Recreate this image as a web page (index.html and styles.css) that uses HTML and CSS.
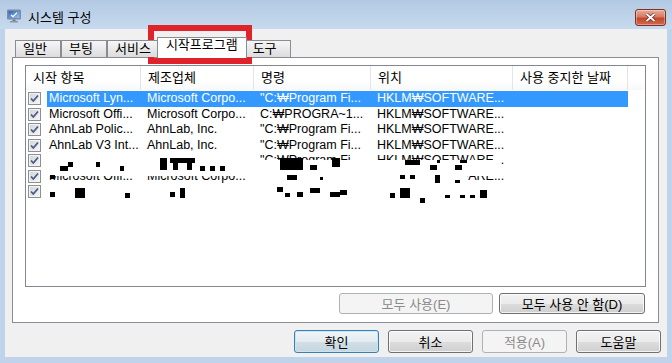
FILE: index.html
```html
<!DOCTYPE html>
<html lang="ko">
<head>
  <meta charset="UTF-8">
  <meta name="viewport" content="width=device-width, initial-scale=1.0">
  <title>시스템 구성</title>
  <link rel="stylesheet" href="styles.css">
</head>
<body>
  <div class="window">
    <div class="titlebar">
      <svg class="app-icon" width="16" height="16" viewBox="0 0 16 16">
        <defs>
          <linearGradient id="scr" x1="0" y1="0" x2="1" y2="1">
            <stop offset="0" stop-color="#2a62b8"/>
            <stop offset="1" stop-color="#9cc2ee"/>
          </linearGradient>
        </defs>
        <rect x="1" y="1.5" width="14" height="10" rx="1" fill="#7d8ca2"/>
        <rect x="2.5" y="3" width="11" height="7" fill="url(#scr)"/>
        <path d="M5 7 L7 8.6 L11 4.6" fill="none" stroke="#fff" stroke-width="1.3"/>
        <rect x="6.5" y="11.5" width="3" height="1.5" fill="#6b7a90"/>
        <rect x="4" y="13" width="8" height="1.5" fill="#8796ab"/>
      </svg>
      <span class="title">시스템 구성</span>
      <button class="close-btn" aria-label="닫기">
        <svg width="11" height="9" viewBox="0 0 11 9">
          <path d="M1.5 1 L9.5 8 M9.5 1 L1.5 8" stroke="#5b2a24" stroke-width="3.2"/>
          <path d="M1.5 1 L9.5 8 M9.5 1 L1.5 8" stroke="#fff" stroke-width="1.8"/>
        </svg>
      </button>
    </div>

    <div class="client">
      <ul class="tabs">
        <li>일반</li>
        <li>부팅</li>
        <li>서비스</li>
        <li class="active">시작프로그램</li>
        <li>도구</li>
      </ul>

      <div class="panel">
        <div class="listview">
          <div class="lv-head">
            <div>시작 항목</div>
            <div>제조업체</div>
            <div>명령</div>
            <div>위치</div>
            <div>사용 중지한 날짜</div>
            <div></div>
          </div>
          <div class="lv-body">
            <div class="lv-row selected">
              <div class="cell first"><span class="check"></span><span class="name">Microsoft Lyn...</span></div>
              <div class="cell">Microsoft Corpo...</div>
              <div class="cell">"C:₩Program Fi...</div>
              <div class="cell">HKLM₩SOFTWARE...</div>
              <div class="cell"></div>
              <div></div>
            </div>
            <div class="lv-row">
              <div class="cell first"><span class="check"></span><span class="name">Microsoft Offi...</span></div>
              <div class="cell">Microsoft Corpo...</div>
              <div class="cell">C:₩PROGRA~1...</div>
              <div class="cell">HKLM₩SOFTWARE...</div>
              <div class="cell"></div>
              <div></div>
            </div>
            <div class="lv-row">
              <div class="cell first"><span class="check"></span><span class="name">AhnLab Polic...</span></div>
              <div class="cell">AhnLab, Inc.</div>
              <div class="cell">"C:₩Program Fi...</div>
              <div class="cell">HKLM₩SOFTWARE...</div>
              <div class="cell"></div>
              <div></div>
            </div>
            <div class="lv-row">
              <div class="cell first"><span class="check"></span><span class="name">AhnLab V3 Int...</span></div>
              <div class="cell">AhnLab, Inc.</div>
              <div class="cell">"C:₩Program Fi...</div>
              <div class="cell">HKLM₩SOFTWARE...</div>
              <div class="cell"></div>
              <div></div>
            </div>
            <div class="lv-row">
              <div class="cell first"><span class="check"></span><span class="name"></span></div>
              <div class="cell"></div>
              <div class="cell">"C:₩Program Fi...</div>
              <div class="cell">HKLM₩SOFTWARE...</div>
              <div class="cell"></div>
              <div></div>
            </div>
            <div class="lv-row">
              <div class="cell first"><span class="check"></span><span class="name">Microsoft Offi...</span></div>
              <div class="cell">Microsoft Corpo...</div>
              <div class="cell">C:₩PROGRA~1...</div>
              <div class="cell">HKLM₩SOFTWARE...</div>
              <div class="cell"></div>
              <div></div>
            </div>
            <div class="lv-row">
              <div class="cell first"><span class="check"></span><span class="name"></span></div>
              <div class="cell"></div>
              <div class="cell"></div>
              <div class="cell"></div>
              <div class="cell"></div>
              <div></div>
            </div>
          </div>
        </div>

        <div class="panel-actions">
          <button class="btn wide" disabled>모두 사용(E)</button>
          <button class="btn wide2">모두 사용 안 함(D)</button>
        </div>
      </div>

      <div class="dialog-actions">
        <button class="btn default">확인</button>
        <button class="btn">취소</button>
        <button class="btn" disabled>적용(A)</button>
        <button class="btn">도움말</button>
      </div>
    </div>

    <!-- censored rows in the original capture -->
    <svg class="redact" width="672" height="363" viewBox="0 0 672 363">
      <g fill="#fff">
        <rect x="44" y="160" width="456" height="16"/>
        <rect x="44" y="184" width="456" height="20"/>
        <rect x="255" y="176" width="212" height="8"/>
      </g>
      <g fill="#000">
        <rect x="60" y="166" width="8" height="5"/>
        <rect x="68" y="162" width="5" height="5"/>
        <rect x="96" y="162" width="4" height="5"/>
        <rect x="120" y="166" width="4" height="5"/>
        <rect x="160" y="158" width="7" height="12"/>
        <rect x="170" y="158" width="25" height="5"/>
        <rect x="173" y="163" width="5" height="7"/>
        <rect x="187" y="163" width="5" height="7"/>
        <rect x="200" y="166" width="5" height="5"/>
        <rect x="210" y="166" width="5" height="5"/>
        <rect x="220" y="166" width="5" height="5"/>
        <rect x="280" y="158" width="23" height="12"/>
        <rect x="310" y="165" width="7" height="5"/>
        <rect x="332" y="158" width="8" height="9"/>
        <rect x="405" y="160" width="15" height="5"/>
        <rect x="430" y="165" width="7" height="5"/>
        <rect x="437" y="160" width="3" height="3"/>
        <rect x="455" y="165" width="7" height="5"/>
        <rect x="460" y="160" width="7" height="3"/>
        <rect x="50" y="175" width="5" height="4"/>
        <rect x="287" y="175" width="10" height="5"/>
        <rect x="320" y="177" width="3" height="3"/>
        <rect x="400" y="175" width="5" height="4"/>
        <rect x="410" y="175" width="5" height="4"/>
        <rect x="435" y="175" width="5" height="8"/>
        <rect x="455" y="180" width="5" height="3"/>
        <rect x="50" y="192" width="5" height="5"/>
        <rect x="75" y="188" width="10" height="10"/>
        <rect x="125" y="193" width="5" height="5"/>
        <rect x="170" y="192" width="5" height="5"/>
        <rect x="180" y="188" width="5" height="10"/>
        <rect x="277" y="187" width="6" height="5"/>
        <rect x="285" y="193" width="5" height="4"/>
        <rect x="297" y="192" width="6" height="5"/>
        <rect x="310" y="188" width="10" height="5"/>
        <rect x="330" y="192" width="10" height="5"/>
        <rect x="340" y="190" width="7" height="5"/>
        <rect x="390" y="193" width="5" height="5"/>
        <rect x="400" y="188" width="10" height="10"/>
        <rect x="420" y="198" width="5" height="5"/>
        <rect x="445" y="195" width="5" height="3"/>
        <rect x="460" y="195" width="5" height="3"/>
        <rect x="470" y="195" width="5" height="3"/>
        <rect x="480" y="190" width="7" height="8"/>
      </g>
    </svg>

    <div class="highlight-box"></div>
  </div>
</body>
</html>
```

FILE: styles.css
```css
* {
  box-sizing: border-box;
}
body {
  margin: 0;
  font-family: "Liberation Sans", "Noto Sans CJK KR", sans-serif;
  font-size: 13px;
  color: #000;
}
.window {
  position: relative;
  width: 672px;
  height: 363px;
  padding: 0 5px 6px 5px;
  background: #bfd4eb;
  display: flex;
  flex-direction: column;
  overflow: hidden;
}

/* title bar */
.titlebar {
  height: 29px;
  margin: 0 -5px;
  padding: 0 6px 0 6px;
  background: linear-gradient(#b3c9e3, #c7daee);
  display: flex;
  align-items: flex-start;
}
.app-icon {
  margin-top: 8px;
}
.title {
  margin: 10px 0 0 6px;
  line-height: 16px;
}
.close-btn {
  margin: 9px 0 0 auto;
  width: 31px;
  height: 17px;
  padding: 0;
  border: 1px solid #7a3227;
  border-radius: 3px;
  background: linear-gradient(#e9ab9b 0%, #d77a63 45%, #c4472d 55%, #d06a4f 100%);
  box-shadow: inset 0 0 0 1px rgba(255, 255, 255, 0.35);
  display: flex;
  align-items: center;
  justify-content: center;
}

/* client area */
.client {
  flex: 1;
  background: #f0f0f0;
  display: flex;
  flex-direction: column;
}
.tabs {
  list-style: none;
  margin: 8px 0 0 10px;
  padding: 0;
  height: 20px;
  display: flex;
  align-items: flex-end;
  position: relative;
  z-index: 1;
}
.tabs li {
  height: 17px;
  min-width: 46px;
  padding: 0 7px;
  line-height: 15px;
  border: 1px solid #898c95;
  border-bottom: none;
  background: linear-gradient(#f6f6f6, #e9e9e9 50%, #dcdcdc);
}
.tabs li.active {
  height: 21px;
  margin: 0 -2px -1px -2px;
  padding: 0 8px;
  line-height: 14px;
  background: #fff;
  position: relative;
  z-index: 2;
}
.panel {
  height: 266px;
  margin: 0 8px 0 7px;
  padding: 7px 12px 8px 12px;
  border: 1px solid #898c95;
  background: #fff;
}

/* list view */
.listview {
  height: 222px;
  border: 1px solid #828790;
  background: #fff;
}
.lv-head,
.lv-row {
  display: grid;
  grid-template-columns: 115px 113px 117px 142px 115px 1fr;
}
.lv-head {
  height: 24px;
  background: linear-gradient(#fff 60%, #f7f8f9);
}
.lv-head div {
  padding-left: 7px;
  line-height: 24px;
  border-right: 1px solid #e3e5e8;
  white-space: nowrap;
}
.lv-head div:last-child {
  border-right: none;
}
.lv-body {
  padding-top: 1px;
  font-size: 12.5px;
}
.lv-row {
  height: 15.5px;
  line-height: 15.5px;
}
.cell {
  padding-left: 6px;
  white-space: nowrap;
  overflow: hidden;
}
.cell.first {
  padding-left: 2px;
  display: flex;
  align-items: center;
}
.check {
  flex: none;
  width: 13px;
  height: 13px;
  border: 1px solid #8e8f8f;
  background:
    url("data:image/svg+xml;utf8,<svg xmlns='http://www.w3.org/2000/svg' width='11' height='11' viewBox='0 0 11 11'><path d='M2 5.5 L4.3 8 L9 2.5' fill='none' stroke='%234a5a82' stroke-width='1.8'/></svg>") center no-repeat,
    linear-gradient(135deg, #cfd3da, #f7f7f7);
  box-shadow: inset 0 0 0 1px #f3f3f3;
}
.name {
  flex: 1;
  height: 100%;
  margin-left: 6px;
  padding-left: 2px;
}
.lv-row.selected .name,
.lv-row.selected .cell:not(.first) {
  background: #3399ff;
  color: #fff;
}

/* buttons */
.panel-actions {
  display: flex;
  justify-content: flex-end;
  gap: 6px;
  margin-top: 6px;
  padding-right: 1px;
}
.btn {
  height: 21px;
  width: 85px;
  padding: 0;
  font: inherit;
  color: #000;
  border: 1px solid #707070;
  border-radius: 3px;
  background: linear-gradient(#f2f2f2 0%, #ebebeb 50%, #dddddd 51%, #cfcfcf 100%);
  box-shadow: inset 0 0 0 1px rgba(255, 255, 255, 0.75);
}
.btn.wide {
  width: 154px;
}
.btn.wide2 {
  width: 146px;
}
.btn:disabled {
  border-color: #adb2b5;
  background: #f4f4f4;
  color: #8a8a8a;
  box-shadow: none;
}
.btn.default {
  border-color: #3c7fb1;
  background: linear-gradient(#eff5f8 0%, #e3ecf1 50%, #d3dfe6 51%, #c5d5de 100%);
  box-shadow: inset 0 0 0 1px #c4e6f7;
}
.dialog-actions {
  display: flex;
  justify-content: flex-end;
  gap: 9px;
  margin-top: 7px;
  padding-right: 6px;
}
.dialog-actions .btn {
  height: 23px;
}

/* overlays */
.redact {
  position: absolute;
  left: 0;
  top: 0;
  pointer-events: none;
}
.highlight-box {
  position: absolute;
  left: 148px;
  top: 25px;
  width: 104px;
  height: 39px;
  border: 6px solid #e0232a;
  pointer-events: none;
}
```
